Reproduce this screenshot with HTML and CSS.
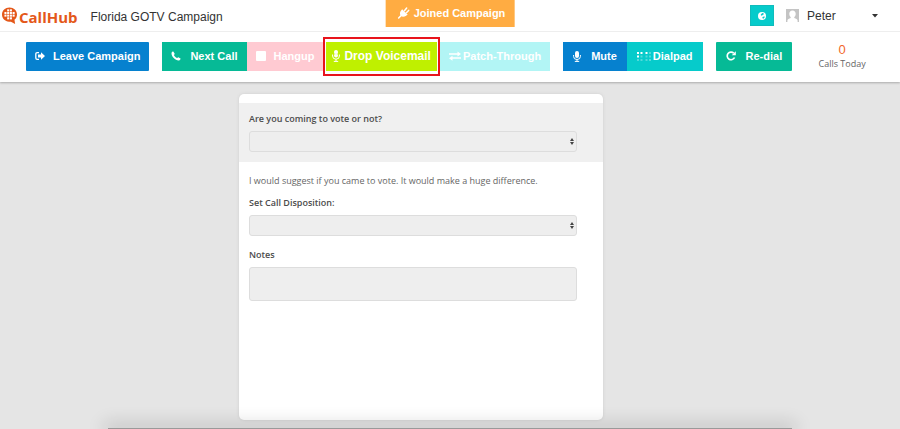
FILE: index.html
```html
<!DOCTYPE html>
<html lang="en">
<head>
<meta charset="utf-8">
<meta name="viewport" content="width=device-width, initial-scale=1">
<title>CallHub</title>
<link rel="stylesheet" href="styles.css">
</head>
<body>
<header class="topbar">
  <a class="logo" href="#">
    <svg class="logo-mark" viewBox="0 0 16 18" aria-hidden="true">
      <path fill="#e4581a" d="M8 0C3.400 0 0 3.200 0 7.500S3.200 15 7.500 15h2L14 17.500 13.300 13C15 11.700 16 9.800 16 7.500 16 3.200 12.600 0 8 0z"/>
      <g fill="#fff">
        <rect x="5.500" y="1.900" width="2.200" height="2.200"/><rect x="8.400" y="1.900" width="2.200" height="2.200"/>
        <rect x="2.600" y="4.700" width="2.200" height="2.200"/><rect x="5.500" y="4.700" width="2.200" height="2.200"/><rect x="8.400" y="4.700" width="2.200" height="2.200"/><rect x="11.300" y="4.700" width="2.200" height="2.200"/>
        <rect x="2.600" y="7.500" width="2.200" height="2.200"/><rect x="5.500" y="7.500" width="2.200" height="2.200"/><rect x="8.400" y="7.500" width="2.200" height="2.200"/><rect x="11.300" y="7.500" width="2.200" height="2.200"/>
        <rect x="5.500" y="10.400" width="2.200" height="2.200"/><rect x="8.400" y="10.400" width="2.200" height="2.200"/>
      </g>
    </svg>
    <span>CallHub</span>
  </a>
  <h1 class="title">Florida GOTV Campaign</h1>
  <div class="status" role="status">
    <svg width="12" height="12" viewBox="0 0 12 12" aria-hidden="true"><g fill="none" stroke="#fff" stroke-linecap="round"><path stroke-width="1.500" d="M7 3.500L9 1M9 5.500L11.200 3.300"/><path stroke-width="1.600" d="M3.500 8.500L1 11"/></g><path fill="#fff" d="M4.500 2.200L10 7.500C8.800 8.600 7.600 9.800 5.500 9.800 3.600 9.800 2.300 8.500 2.300 6.600 2.300 4.700 3.400 3.400 4.500 2.200z"/></svg>
    <span>Joined Campaign</span>
  </div>
  <div class="account">
    <button class="globe" type="button" aria-label="Language">
      <svg width="8" height="8" viewBox="0 0 8 8" aria-hidden="true"><circle cx="4" cy="4" r="4" fill="#fff"/><path fill="#06cbcb" d="M4.200.9l1.700.5-.3 1.100-1 .4-.8.900L2.600 3 3.300 2zM4.600 5l1.900-.8.100 1.200L5.300 6.700 4.300 6z"/></svg>
    </button>
    <button class="user" type="button" aria-haspopup="menu">
      <svg width="13" height="13" viewBox="0 0 13 13" aria-hidden="true"><rect width="13" height="13" fill="#c4c4c4"/><path fill="#fff" d="M6.500 1.500c2 0 3.200 1.300 3.200 3.200 0 1.500-.5 2.600-1.400 3.300v1c1.800.5 3 1 3.300 2.500V13H1.400v-1.500C1.700 10 2.900 9.500 4.700 9V8C3.800 7.300 3.300 6.200 3.300 4.700c0-1.900 1.200-3.200 3.200-3.200z"/></svg>
      <span class="user-name">Peter</span>
      <svg width="6" height="4" viewBox="0 0 6 4" aria-hidden="true"><path fill="#333" d="M0 0h6L3 3.500z"/></svg>
    </button>
  </div>
</header>
<nav class="toolbar" aria-label="Call controls">
  <button class="btn blue" type="button">
    <svg width="10" height="10" viewBox="0 0 10 10" aria-hidden="true"><path fill="none" stroke="#fff" stroke-width="1.300" d="M4 1.600H2.200Q.8 1.600.8 3v4q0 1.400 1.400 1.400H4"/><path fill="#fff" d="M6 1.200L10 5 6 8.800V6.400H3V3.600h3z"/></svg>
    <span>Leave Campaign</span>
  </button>
  <div class="group">
    <button class="btn green roomy" type="button">
      <svg width="10" height="10" viewBox="0 0 10 10" aria-hidden="true"><path fill="#fff" d="M2.300.6L3.700 2.700c.2.400-.7 1.100-.8 1.300C3.500 5.300 4.700 6.500 6 7.100c.3 0 .9-1 1.300-.8l2.200 1.300c.3.300-.4 1.900-1.700 1.900C4.500 9.700.3 5.500.5 2.200.5 1 2 .3 2.300.6z"/></svg>
      <span>Next Call</span>
    </button>
    <button class="btn pink" type="button" disabled>
      <svg width="10" height="10" viewBox="0 0 10 10" aria-hidden="true"><rect width="10" height="10" rx="1" fill="#fff"/></svg>
      <span>Hangup</span>
    </button>
    <div class="highlight">
      <button class="btn lime" type="button">
        <svg width="8" height="12" viewBox="0 0 8 12" aria-hidden="true"><rect x="2" y="0" width="4" height="7.500" rx="2" fill="#fff"/><path fill="none" stroke="#fff" d="M.6 4.500V6a3.400 3.200 0 0 0 6.800 0V4.500M4 9.200v2M1.800 11.400h4.400"/><path stroke="#bff000" stroke-width=".5" d="M2 3.300h1.300M2 4.700h1.300M4.700 3.300H6M4.700 4.700H6"/></svg>
        <span>Drop Voicemail</span>
      </button>
    </div>
    <button class="btn pale" type="button" disabled>
      <svg width="12" height="10" viewBox="0 0 12 10" aria-hidden="true"><path fill="#fff" d="M0 2.300h8.500V.5L12 3 8.500 5.500V3.700H0zM12 6.300H3.500V4.800L0 7.200l3.500 2.500V7.800H12z"/></svg>
      <span>Patch-Through</span>
    </button>
  </div>
  <div class="group">
    <button class="btn blue wide" type="button">
      <svg width="8" height="11" viewBox="0 0 8 11" aria-hidden="true"><rect x="2" y="0" width="4" height="7" rx="2" fill="#fff"/><path fill="none" stroke="#fff" d="M.6 4v1.500a3.400 3 0 0 0 6.800 0V4M4 8.500v2M1.800 10.400h4.400"/></svg>
      <span>Mute</span>
    </button>
    <button class="btn cyan" type="button">
      <svg width="14" height="9" viewBox="0 0 14 9" aria-hidden="true"><g fill="#fff"><path d="M0 0h2v2H0zM3.500 0h2v2h-2zM8.500 0h2v2h-2zM0 3.500h2v2H0z"/><path opacity=".3" d="M12 0h2v2h-2zM3.500 3.500h2v2h-2zM8.500 3.500h2v2h-2zM12 3.500h2v2h-2zM0 7h2v2H0zM3.500 7h2v2h-2zM8.500 7h2v2h-2zM12 7h2v2h-2z"/></g></svg>
      <span>Dialpad</span>
    </button>
  </div>
  <button class="btn green wide" type="button">
    <svg width="10" height="10" viewBox="0 0 10 10" aria-hidden="true"><path fill="none" stroke="#fff" stroke-width="1.700" d="M8.500 6.500A3.800 3.800 0 1 1 7.700 2.200"/><path fill="#fff" d="M9.800.3v4H5.700z"/></svg>
    <span>Re-dial</span>
  </button>
  <div class="counter"><strong class="counter-value">0</strong><span>Calls Today</span></div>
</nav>
<main class="page">
  <form class="card">
    <div class="field question">
      <label for="vote">Are you coming to vote or not?</label>
      <div class="select"><select id="vote"><option></option></select></div>
    </div>
    <p class="script">I would suggest if you came to vote. It would make a huge difference.</p>
    <div class="field">
      <label for="disposition">Set Call Disposition:</label>
      <div class="select"><select id="disposition"><option></option></select></div>
    </div>
    <div class="field notes">
      <label for="notes">Notes</label>
      <textarea id="notes"></textarea>
    </div>
  </form>
</main>
</body>
</html>
```
FILE: styles.css
```css
* { box-sizing: border-box; }

body {
  margin: 0;
  min-height: 100vh;
  display: flex;
  flex-direction: column;
  background: #e5e5e5;
  color: #4c4c4c;
  font-family: "Open Sans", sans-serif;
  font-size: 9px;
  line-height: 12px;
}

button, select, textarea { font: inherit; margin: 0; }
svg { display: block; flex: none; }

.topbar {
  position: relative;
  display: flex;
  align-items: center;
  height: 32px;
  padding: 0 22px 0 2px;
  background: #fff;
  border-bottom: 1px solid #eee;
}

.logo {
  display: flex;
  align-items: center;
  gap: 2px;
  color: #e4581a;
  font-size: 15px;
  font-weight: 700;
  line-height: 20px;
  text-decoration: none;
}
.logo span { padding-top: 2px; }
.logo-mark { width: 15px; height: 18px; }

.title {
  margin: 0 0 0 13px;
  padding-top: 3px;
  color: #333;
  font: 400 12px/16px "Liberation Sans", sans-serif;
}

.status {
  position: absolute;
  top: 0;
  left: 50%;
  transform: translateX(-50%);
  display: flex;
  align-items: center;
  gap: 4px;
  height: 27px;
  padding: 0 9px 2px 12px;
  background: #ffac42;
  color: #fff;
  font: 700 11px/16px "Liberation Sans", sans-serif;
  white-space: nowrap;
}

.account {
  display: flex;
  align-items: center;
  gap: 12px;
  margin-left: auto;
}
.globe {
  display: grid;
  place-items: center;
  width: 24px;
  height: 21px;
  padding: 0;
  border: 1px solid #10bcbc;
  background: #06cbcb;
}
.user {
  display: flex;
  align-items: center;
  gap: 8px;
  width: 92px;
  padding: 0;
  border: 0;
  background: none;
  color: #333;
  font: 400 12px/16px "Liberation Sans", sans-serif;
}
.user-name { flex: 1; text-align: left; }

.toolbar {
  display: flex;
  align-items: center;
  gap: 13px;
  height: 50px;
  padding: 0 0 2px 26px;
  background: #fff;
  box-shadow: 0 1px 2px #aaa;
}
.group { display: flex; align-items: center; }

.btn {
  display: flex;
  align-items: center;
  justify-content: center;
  gap: 8px;
  height: 29px;
  padding: 0 9px;
  border: 0;
  border-radius: 1px;
  color: #fff;
  font: 700 11px/16px "Liberation Sans", sans-serif;
  white-space: nowrap;
}
.group .btn { border-radius: 0; }
.blue { background: #0681cf; }
.green { background: #06ba96; }
.pink { background: #ffcad2; }
.cyan { background: #06cbcb; padding: 0 10px; gap: 2px; }
.pale { background: #b2f5f5; gap: 2px; }
.lime { background: #bff000; font-size: 12px; gap: 4px; padding: 0 6px; }
.roomy { gap: 9px; }
.wide { padding: 0 10px; gap: 10px; }

.highlight {
  padding: 3px 1px;
  border: 2px solid #e8141c;
}

.counter {
  flex: 1;
  display: flex;
  flex-direction: column;
  align-items: center;
  padding-right: 21px;
  color: #666;
}
.counter-value {
  color: #f2682a;
  font: 400 13px/16px "Liberation Sans", sans-serif;
}

.page {
  flex: 1;
  display: flex;
  padding: 12px 0 9px 239px;
}
.page::after {
  content: "";
  position: fixed;
  bottom: 0;
  left: 12%;
  right: 12%;
  height: 1px;
  background: #999;
  box-shadow: 0 0 18px 4px rgb(0 0 0 / 20%);
  pointer-events: none;
}

.card {
  width: 55%;
  padding-top: 9px;
  border-radius: 5px;
  background: #fff;
  box-shadow: 0 0 3px #ccc;
}
.field {
  display: flex;
  flex-direction: column;
  gap: 6px;
  padding: 0 26px 0 10px;
}
.field label { font-weight: 600; }
.question {
  padding-top: 10px;
  padding-bottom: 10px;
  background: #f0f0f0;
}
.script { margin: 13px 10px 10px; color: #666; }
.notes { padding-top: 13px; }

.select { position: relative; display: flex; }
.select::before, .select::after {
  content: "";
  position: absolute;
  right: 3px;
  border: 2px solid transparent;
  pointer-events: none;
}
.select::before { top: 5px; border-bottom: 3px solid #444; }
.select::after { bottom: 5px; border-top: 3px solid #444; }
.select select {
  flex: 1;
  height: 21px;
  appearance: none;
}
select, textarea {
  border: 1px solid #ddd;
  border-radius: 3px;
  background: #eee;
}
textarea { display: block; height: 34px; resize: none; }
```
